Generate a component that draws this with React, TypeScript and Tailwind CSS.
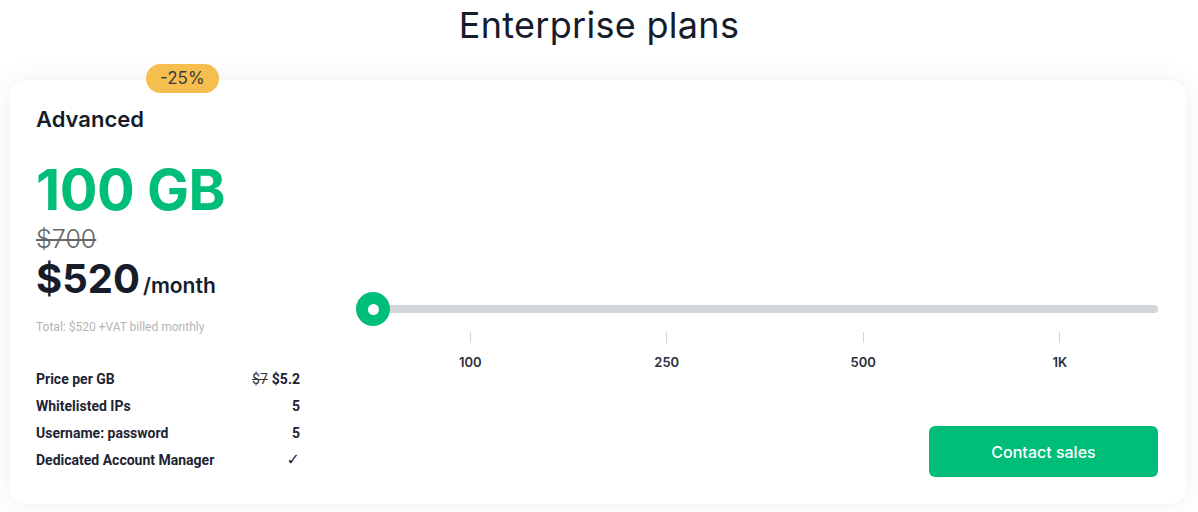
import React from "react";

const rows = [
  { label: "Price per GB", old: "$7", value: "$5.2" },
  { label: "Whitelisted IPs", value: "5" },
  { label: "Username: password", value: "5" },
  { label: "Dedicated Account Manager", value: "✓" },
];

const ticks = ["100", "250", "500", "1K"];

export default function App() {
  return (
    <div className="min-h-[512px] w-full bg-white font-['Inter',sans-serif] text-[#161c2a]">
      <h1 className="pt-[3px] text-center text-[36px] leading-[44px] font-normal tracking-[0.3px]">
        Enterprise plans
      </h1>

      <div className="relative ml-[10px] mr-[12px] mt-[33px] flex rounded-[16px] bg-white pt-[24px] pb-[27px] pl-[26px] pr-[28px] shadow-[0_0_28px_rgba(0,0,0,0.07)]">
        <span className="absolute left-[136px] top-[-16px] rounded-full bg-[#f6bd4f] px-[14px] py-[3px] text-[17px] leading-[23px] text-[#3b3b3b]">
          -25%
        </span>

        {/* left side: plan info */}
        <div className="flex w-[264px] flex-col pb-[7px]">
          <div className="text-[22px] leading-[30px] font-semibold">Advanced</div>
          <div className="mt-[24px] text-[56px] leading-[64px] font-bold tracking-[-0.5px] text-[#00bd78]">
            100 GB
          </div>
          <div className="mt-[3px] text-[25px] leading-[28px] font-light text-[#666] line-through">
            $700
          </div>
          <div className="mt-[2px] flex items-baseline">
            <span className="text-[40px] leading-[48px] font-bold">$520</span>
            <span className="ml-[3px] text-[21px] font-semibold">/month</span>
          </div>
          <div className="mt-[16px] font-['Roboto',sans-serif] text-[12px] leading-[16px] text-[#b5b5b5]">
            Total: $520 +VAT billed monthly
          </div>

          <div className="mt-[34px] flex flex-col font-['Roboto',sans-serif] text-[14px] leading-[20px] font-bold text-[#1e2433]">
            {rows.map((r, i) => (
              <div key={r.label} className={`flex justify-between ${i > 0 ? "mt-[7px]" : ""}`}>
                <span>{r.label}</span>
                <span>
                  {r.old && (
                    <span className="mr-[4px] font-normal text-[#333] line-through">{r.old}</span>
                  )}
                  {r.value === "✓" ? (
                    <span className="font-['DejaVu_Sans',sans-serif] text-[16px] font-normal">✓</span>
                  ) : (
                    r.value
                  )}
                </span>
              </div>
            ))}
          </div>
        </div>

        {/* right side: slider + button */}
        <div className="ml-[56px] flex flex-1 flex-col justify-end">
          <div className="relative h-[34px]">
            <div className="ml-[16px] mt-[13px] h-[8px] rounded-full bg-[#d2d6da]" />
            <div className="absolute left-0 top-0 flex h-[34px] w-[34px] items-center justify-center rounded-full bg-[#00bd78]">
              <div className="h-[11px] w-[11px] rounded-full bg-white" />
            </div>
          </div>
          <div className="ml-[16px] mt-[6px] grid grid-cols-4">
            {ticks.map((t) => (
              <div key={t} className="flex flex-col items-center">
                <div className="h-[11px] w-[1px] bg-[#cfd3d8]" />
                <div className="mt-[10px] text-[13px] leading-[18px] font-semibold text-[#2a2f3a]">{t}</div>
              </div>
            ))}
          </div>
          <div className="mt-[55px] flex justify-end">
            <button className="h-[51px] w-[229px] rounded-[6px] bg-[#00bd78] text-[16px] font-medium text-white">
              Contact sales
            </button>
          </div>
        </div>
      </div>
    </div>
  );
}
